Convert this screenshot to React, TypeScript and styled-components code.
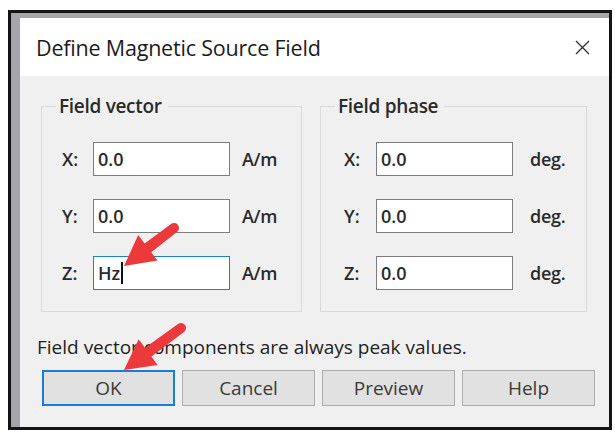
import React from 'react';
import styled, {createGlobalStyle} from 'styled-components';

const GlobalStyle = createGlobalStyle`
body {
  margin: 0;
  background: #ffffff;
  font-family: "Open Sans", "Noto Sans", "Liberation Sans", sans-serif;
}
`

const Page = styled.div`
position: relative;
width: 615px;
height: 432px;
padding: 10px 0 0 8px;
box-sizing: border-box;
`

const Frame = styled.div`
width: 604px;
height: 420px;
box-sizing: border-box;
border: 3px solid #141414;
background: #a5a5aa;
padding: 5px 0 0 9px;
display: flex;
`

const Dialog = styled.div`
flex: 1;
display: flex;
flex-direction: column;
background: #f0f0f0;
`

const TitleBar = styled.div`
height: 58px;
background: #ffffff;
display: flex;
align-items: center;
justify-content: space-between;
padding: 0 19px 0 16px;
font-size: 21.5px;
color: #1b1b1b;
letter-spacing: -0.2px;
`

const Groups = styled.div`
display: flex;
gap: 18px;
padding: 18px 0 0 21px;
`

const Group = styled.fieldset<{$width: number, $pad: number, $labelCol: number}>`
width: ${p => p.$width}px;
box-sizing: border-box;
margin: 0;
padding: 24px 0 21px ${p => p.$pad}px;
border: 1px solid #dadada;
display: grid;
grid-template-columns: ${p => p.$labelCol}px 137px auto;
row-gap: 23px;
column-gap: 0;
align-items: center;
`

const Legend = styled.legend<{$shift: number}>`
margin-left: ${p => p.$shift}px;
padding: 0 6px 0 3px;
font-size: 19px;
font-weight: 600;
line-height: 24px;
color: #2a2a2a;
letter-spacing: -0.3px;
`

const Label = styled.span`
font-size: 18px;
font-weight: 600;
color: #2a2a2a;
`

const Field = styled.div<{$focused?: boolean}>`
height: 34px;
box-sizing: border-box;
background: #ffffff;
border: 1px solid ${p => p.$focused ? '#1a7fd4' : '#7d7d7d'};
padding: 0 4px;
display: flex;
align-items: center;
font-size: 18px;
font-weight: 600;
color: #2a2a2a;
`

const Caret = styled.span`
display: inline-block;
width: 2px;
height: 22px;
background: #111;
margin-left: 1px;
`

const Unit = styled.span<{$gap: number}>`
padding-left: ${p => p.$gap}px;
font-size: 18px;
font-weight: 600;
color: #2a2a2a;
letter-spacing: -0.3px;
`

const Note = styled.div`
padding: 23px 0 0 17px;
font-size: 19px;
color: #1e1e1e;
letter-spacing: 0;
line-height: 24px;
`

const Buttons = styled.div`
display: flex;
gap: 7px;
padding: 11px 0 0 22px;
`

const Button = styled.button<{$primary?: boolean}>`
width: 133px;
height: 36px;
box-sizing: border-box;
background: #e1e1e1;
border: ${p => p.$primary ? '2px solid #1a7fd4' : '1px solid #adadad'};
font-family: inherit;
font-size: 19px;
color: #3a3a3a;
padding: 0;
`

const Overlay = styled.svg`
position: absolute;
left: 0;
top: 0;
pointer-events: none;
`

function Arrow(props: {x: number, y: number, tipX: number, tipY: number}) {
    const dx = props.tipX - props.x;
    const dy = props.tipY - props.y;
    const len = Math.sqrt(dx * dx + dy * dy);
    const angle = Math.atan2(dy, dx) * 180 / Math.PI;
    const h = 30;
    return (
        <g transform={`translate(${props.x} ${props.y}) rotate(${angle})`}>
            <path d={`M0 -5 L${len - h + 2} -5.5 L${len - h + 2} 5.5 L0 5 A5 5 0 0 1 0 -5 Z`} fill="#ec3a3c" />
            <path d={`M${len - h} -16 L${len} 0 L${len - h} 16 Z`} fill="#ec3a3c" />
        </g>
    );
}

function Row(props: {axis: string, value: string, unit: string, gap: number, focused?: boolean}) {
    return (
        <>
            <Label>{props.axis}:</Label>
            <Field $focused={props.focused}>
                {props.value}
                {props.focused && <Caret />}
            </Field>
            <Unit $gap={props.gap}>{props.unit}</Unit>
        </>
    );
}

export default function App() {
    return (
        <Page>
            <GlobalStyle />
            <Frame>
                <Dialog>
                    <TitleBar>
                        <span>Define Magnetic Source Field</span>
                        <svg width="15" height="15" viewBox="0 0 15 15">
                            <path d="M1 1 L14 14 M14 1 L1 14" stroke="#333" strokeWidth="1.4" />
                        </svg>
                    </TitleBar>
                    <Groups>
                        <Group $width={261} $pad={20} $labelCol={31}>
                            <Legend $shift={-6}>Field vector</Legend>
                            <Row axis="X" value="0.0" unit="A/m" gap={12} />
                            <Row axis="Y" value="0.0" unit="A/m" gap={12} />
                            <Row axis="Z" value="Hz" unit="A/m" gap={12} focused />
                        </Group>
                        <Group $width={267} $pad={23} $labelCol={32}>
                            <Legend $shift={-9}>Field phase</Legend>
                            <Row axis="X" value="0.0" unit="deg." gap={17} />
                            <Row axis="Y" value="0.0" unit="deg." gap={17} />
                            <Row axis="Z" value="0.0" unit="deg." gap={17} />
                        </Group>
                    </Groups>
                    <Note>Field vector components are always peak values.</Note>
                    <Buttons>
                        <Button $primary>OK</Button>
                        <Button>Cancel</Button>
                        <Button>Preview</Button>
                        <Button>Help</Button>
                    </Buttons>
                </Dialog>
            </Frame>
            <Overlay width="615" height="432">
                <Arrow x={174} y={228} tipX={124} tipY={266} />
                <Arrow x={181} y={328} tipX={124} tipY={370} />
            </Overlay>
        </Page>
    );
}
